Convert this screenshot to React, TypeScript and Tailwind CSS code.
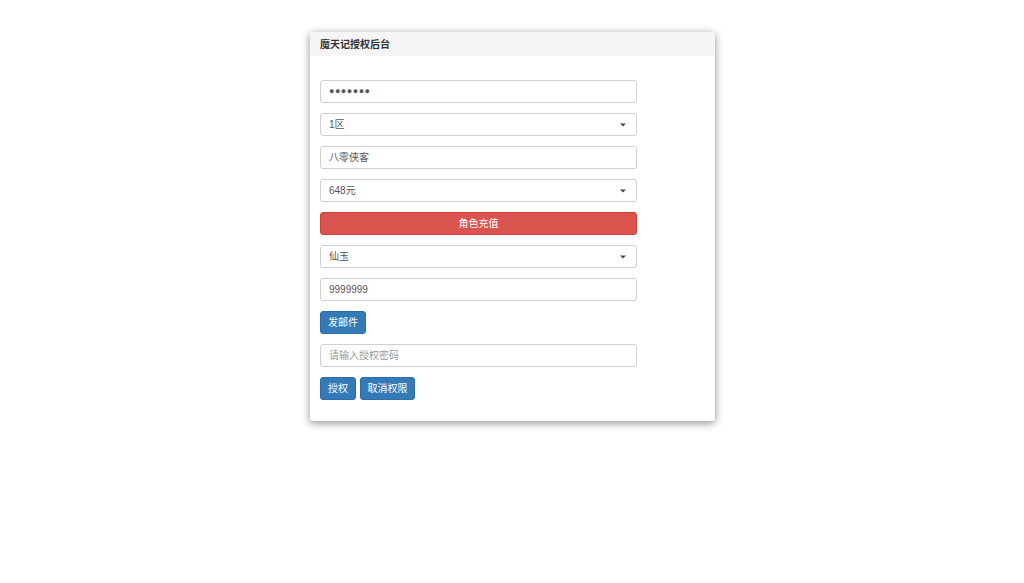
import React from "react";

const Caret = () => (
  <span className="absolute right-[10px] top-1/2 -translate-y-1/2 w-0 h-0 border-l-[3px] border-r-[3px] border-t-[3px] border-l-transparent border-r-transparent border-t-[#444]" />
);

const inputCls =
  "h-[23px] w-full rounded-[3px] border border-[#d0d0d0] bg-white px-[8px] text-[10px] leading-[21px] text-[#555] flex items-center";

export default function App() {
  return (
    <div
      className="min-h-[583px] w-[1024px] bg-white"
      style={{ fontFamily: '"Helvetica Neue", "Liberation Sans", Arial, "Noto Sans CJK SC", sans-serif' }}
    >
      <div className="pt-[32px] pl-[310px]">
        <div className="w-[405px] rounded-[3px] bg-white shadow-[0_2px_8px_rgba(0,0,0,0.45)]">
          <div className="h-[24px] rounded-t-[3px] bg-[#f5f5f5] px-[10px] flex items-center text-[10px] font-bold text-[#333]">
            魔天记授权后台
          </div>
          <div className="pl-[10px] pr-[78px] pt-[24px] pb-[21px] flex flex-col gap-[10px]">
            <div className={inputCls}>
              <span className="text-[#555] tracking-[0.5px] text-[9px]">●●●●●●●</span>
            </div>
            <div className={`${inputCls} relative`}>
              1区
              <Caret />
            </div>
            <div className={inputCls}>八零侠客</div>
            <div className={`${inputCls} relative`}>
              648元
              <Caret />
            </div>
            <button className="h-[23px] w-full rounded-[3px] border border-[#d43f3a] bg-[#d9534f] text-[10px] text-white">
              角色充值
            </button>
            <div className={`${inputCls} relative`}>
              仙玉
              <Caret />
            </div>
            <div className={inputCls}>9999999</div>
            <div className="flex">
              <button className="h-[23px] w-[46px] rounded-[3px] border border-[#2e6da4] bg-[#337ab7] text-[10px] text-white">
                发邮件
              </button>
            </div>
            <div className={inputCls}>
              <span className="text-[#999]">请输入授权密码</span>
            </div>
            <div className="flex gap-[4px]">
              <button className="h-[23px] w-[36px] rounded-[3px] border border-[#2e6da4] bg-[#337ab7] text-[10px] text-white">
                授权
              </button>
              <button className="h-[23px] w-[55px] rounded-[3px] border border-[#2e6da4] bg-[#337ab7] text-[10px] text-white">
                取消权限
              </button>
            </div>
          </div>
        </div>
      </div>
    </div>
  );
}
